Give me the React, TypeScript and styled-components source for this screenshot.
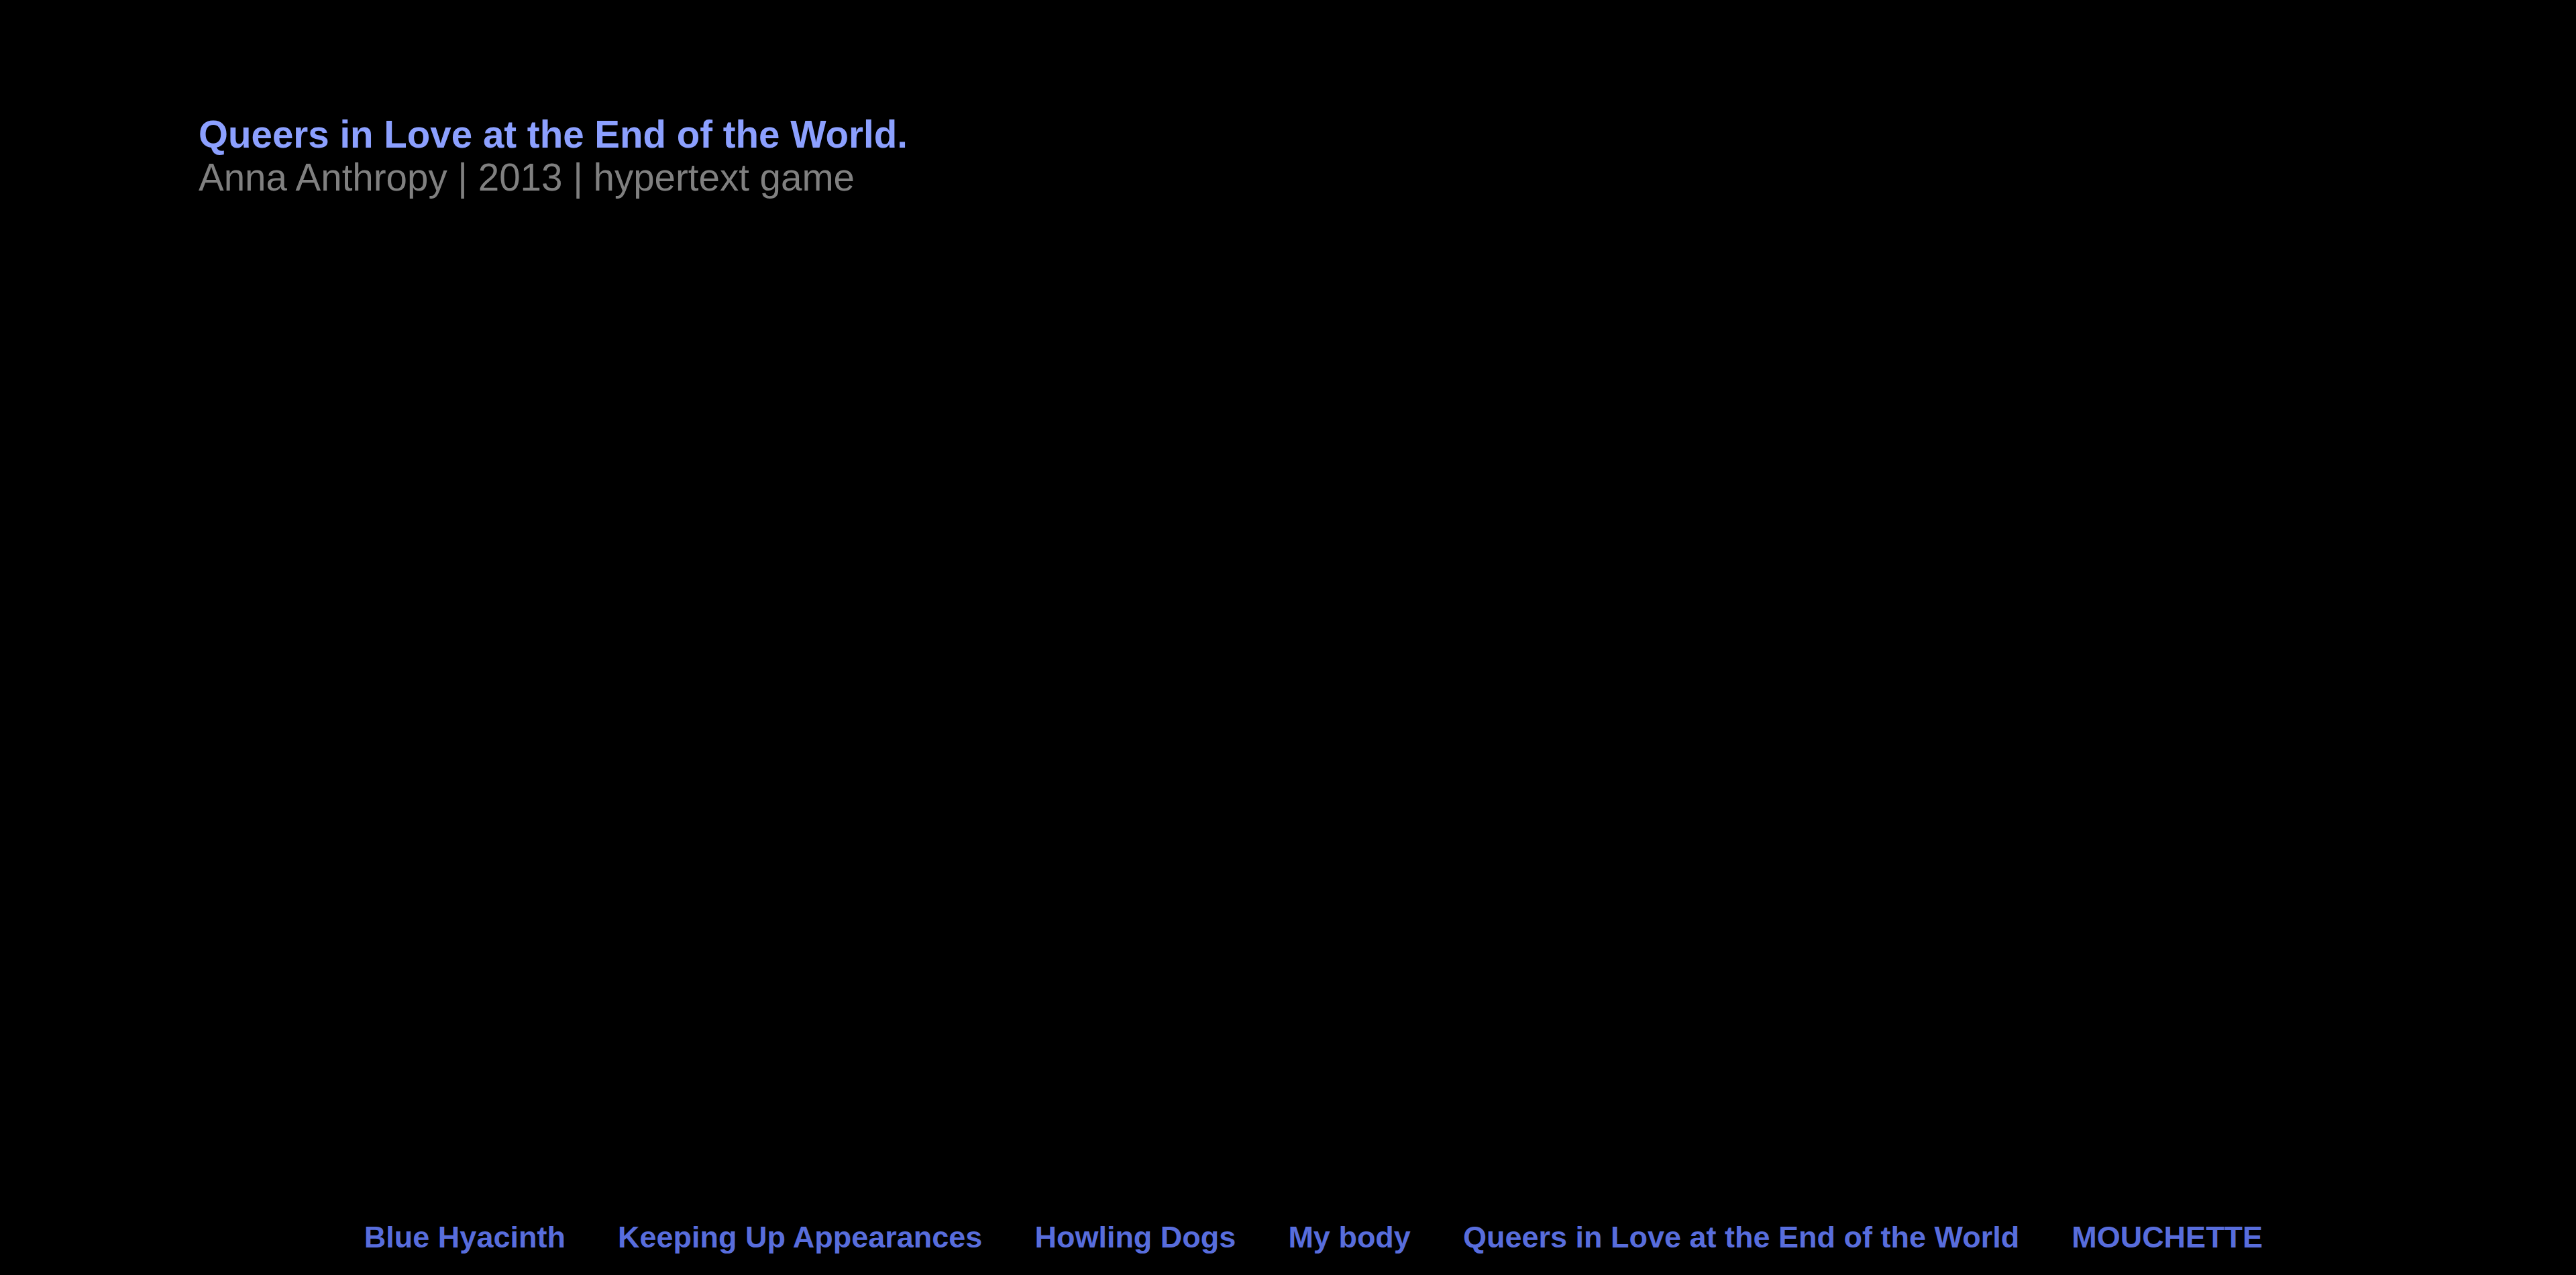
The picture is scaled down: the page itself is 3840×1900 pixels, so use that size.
import styled, { createGlobalStyle } from 'styled-components'

const GlobalStyle = createGlobalStyle`
  html, body {
    margin: 0;
    padding: 0;
    background: #000;
  }

  body {
    font-family: 'Liberation Sans', Arial, sans-serif;
  }
`

const links = [
  'Blue Hyacinth',
  'Keeping Up Appearances',
  'Howling Dogs',
  'My body',
  'Queers in Love at the End of the World',
  'MOUCHETTE',
]

export default function App() {
  return (
    <>
      <GlobalStyle />
      <Page>
        <Header>
          <Title>Queers in Love at the End of the World.</Title>
          <Meta>Anna Anthropy | 2013 | hypertext game</Meta>
        </Header>
        <Nav>
          {links.map((label) => (
            <NavLink key={label} href="#">
              {label}
            </NavLink>
          ))}
        </Nav>
      </Page>
    </>
  )
}

const Page = styled.div`
  display: flex;
  flex-direction: column;
  justify-content: space-between;
  height: 1900px;
  background: #000;
`

const Header = styled.header`
  padding: 169px 0 0 296px;
`

const Title = styled.h1`
  margin: 0;
  font-size: 56.5px;
  font-weight: bold;
  line-height: 63px;
  color: #8ca0ff;
`

const Meta = styled.p`
  margin: 0;
  font-size: 56.5px;
  line-height: 66px;
  color: #808080;
`

const Nav = styled.nav`
  display: flex;
  justify-content: center;
  gap: 78px;
  padding: 0 0 30px 76px;
`

const NavLink = styled.a`
  font-size: 45px;
  font-weight: bold;
  line-height: normal;
  color: #586ddc;
  text-decoration: none;
`
